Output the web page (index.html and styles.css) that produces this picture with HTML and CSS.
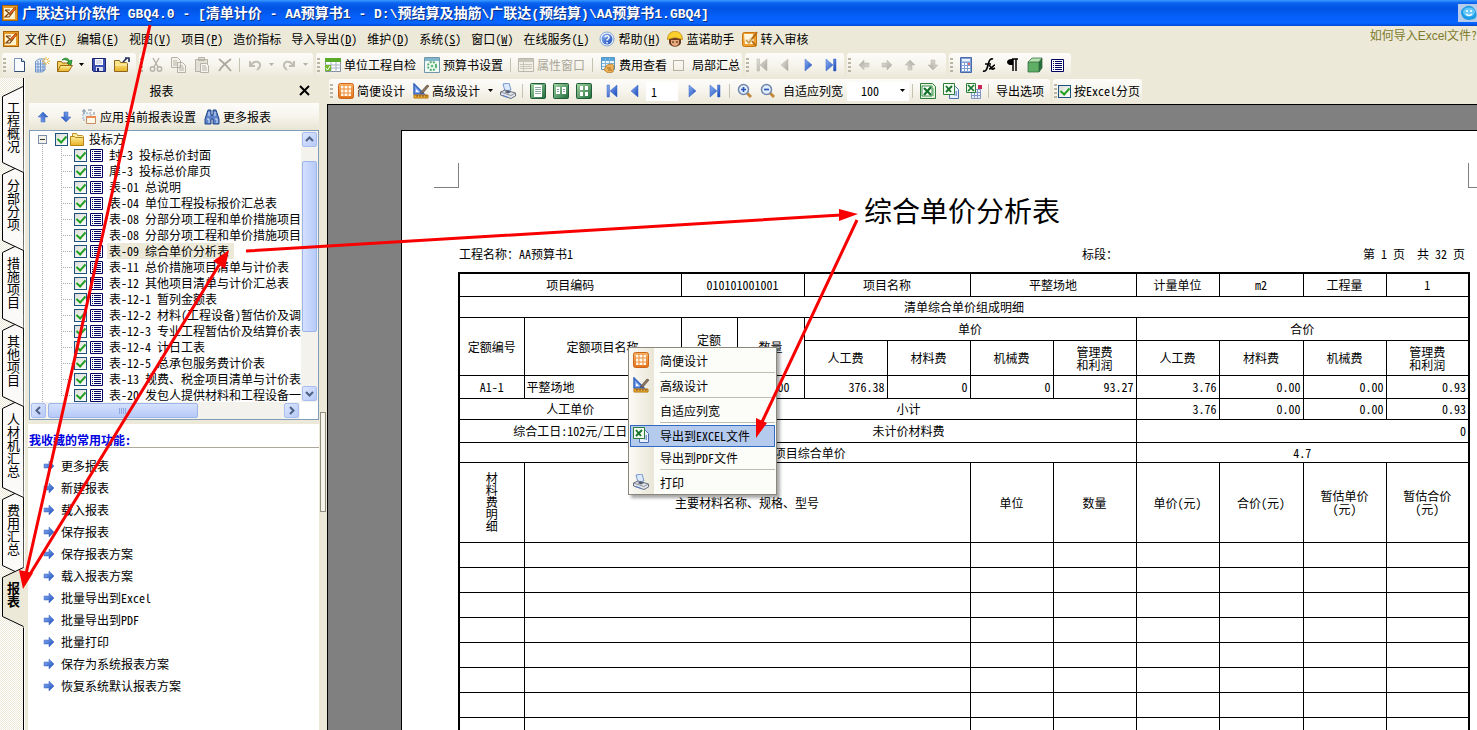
FILE: index.html
```html
<!DOCTYPE html>
<html lang="zh-CN">
<head>
<meta charset="utf-8">
<title>广联达计价软件 GBQ4.0</title>
<link rel="stylesheet" href="styles.css">
</head>
<body>
<svg class="sprite" aria-hidden="true">
<defs>
<linearGradient id="blu" x1="0" y1="0" x2="1" y2="1"><stop offset="0" stop-color="#8db4f4"/><stop offset="1" stop-color="#1746b8"/></linearGradient>
<linearGradient id="gra" x1="0" y1="0" x2="1" y2="1"><stop offset="0" stop-color="#e2e0d8"/><stop offset="1" stop-color="#a9a79e"/></linearGradient>
<linearGradient id="grn" x1="0" y1="0" x2="1" y2="1"><stop offset="0" stop-color="#a8d8a8"/><stop offset="1" stop-color="#1e6b3a"/></linearGradient>
<linearGradient id="org" x1="0" y1="0" x2="0" y2="1"><stop offset="0" stop-color="#f9b468"/><stop offset="1" stop-color="#e2711a"/></linearGradient>
<linearGradient id="yel" x1="0" y1="0" x2="0" y2="1"><stop offset="0" stop-color="#fdf0a0"/><stop offset="1" stop-color="#e8b020"/></linearGradient>
</defs>
<symbol id="app" viewBox="0 0 16 16"><rect x=".5" y=".5" width="15" height="15" fill="#e89a28" stroke="#a86408"/><path d="M2 3h9l2 3v8H2z" fill="#fff3cf"/><path d="M3 5h5M3 5l4 3-4 4h4l4-5" fill="none" stroke="#7c3f0a" stroke-width="1.200"/><path d="m7 10 1-3 5-5 1 2-5 5z" fill="#e8641a" stroke="#7c3f0a" stroke-width=".6"/></symbol>
<symbol id="new" viewBox="0 0 16 16"><path d="M3.500 1.500h7l3 3v10h-10z" fill="#f8fbff" stroke="#7d93b8"/><path d="M13.500 4.500v10h-10" fill="none" stroke="#31486f"/><path d="M10.500 1.500v3h3" fill="#cddcf4" stroke="#31486f"/></symbol>
<symbol id="newp" viewBox="0 0 16 16"><path d="M1.500 4.500 5 2h6v11l-3 2H1.500z" fill="#e4eefc" stroke="#6f93c8"/><path d="M4 4v11M6.500 3v12M9 3v11M1 7h10M1 10h10M1 13h10" stroke="#6f93c8"/><path d="M12 0v8M8 4h8M9 1l6 6M15 1 9 7" stroke="#f5b83a"/><circle cx="12" cy="4" r="1.500" fill="#fff"/></symbol>
<symbol id="open" viewBox="0 0 16 16"><path d="M.5 14.500v-10h4l1 1.500h6v3" fill="#f5cf60" stroke="#9a6b10"/><path d="m.5 14.500 3-6h12l-4 6z" fill="url(#yel)" stroke="#9a6b10"/><path d="M5 3c3-3 6-2 8 1l2-1-1 5-4-2 2-1c-2-2-4-3-7-2z" fill="#35b23c" stroke="#12691b" stroke-width=".7"/></symbol>
<symbol id="save" viewBox="0 0 16 16"><path d="M1.500 1.500h13v13h-12l-1-1z" fill="#3d51b4" stroke="#1b2470"/><path d="M4 2h8v6H4z" fill="#fff"/><path d="M5 4h6M5 6h6" stroke="#b7bed8"/><path d="M5 10h7v4H5z" fill="#d9dff0"/><path d="M6 11h2v3H6z" fill="#1b2470"/></symbol>
<symbol id="fold" viewBox="0 0 16 16"><path d="M.5 14.500v-11h5l1 2h6l1 1v8z" fill="url(#yel)" stroke="#8a6420"/><path d="M1 8h12" stroke="#fff5c0"/><path d="m9 5 4-4M11 1h4v4" fill="none" stroke="#26355c" stroke-width="1.700"/></symbol>
<symbol id="cut" viewBox="0 0 16 16"><g fill="none" stroke="#b5b2a7" stroke-width="1.400"><path d="m5 1 5 9M11 1 6 10"/><circle cx="4.500" cy="12" r="2.200"/><circle cx="11.500" cy="12" r="2.200"/></g></symbol>
<symbol id="copy" viewBox="0 0 16 16"><g fill="#f3f1e9" stroke="#b5b2a7"><path d="M.5.5h6l3 3v7h-9zM6.500 5.500h5l3 3v7h-8z"/><path d="M2 4h4M2 6h4M2 8h4M8 9h4M8 11h5M8 13h5"/></g></symbol>
<symbol id="paste" viewBox="0 0 16 16"><g fill="#e3e0d5" stroke="#b5b2a7"><path d="M1.500 2.500h12v12h-12zM4.500.5h6v3h-6z"/><path d="M6.500 6.500h6l2 2v7h-8z" fill="#f6f4ee"/><path d="M8 9h4M8 11h5M8 13h5"/></g></symbol>
<symbol id="del" viewBox="0 0 16 16"><path d="M2 2c4 3 8 7 12 12M14 2C10 5 5 9 2 14" fill="none" stroke="#aaa79c" stroke-width="1.700"/></symbol>
<symbol id="undo" viewBox="0 0 16 16"><path d="M3 4v5h5M4 8c3-5 10-4 9 1-.4 2-2 3-3 4" fill="none" stroke="#c0bdb2" stroke-width="2"/></symbol>
<symbol id="redo" viewBox="0 0 16 16"><path d="M13 4v5H8M12 8c-3-5-10-4-9 1 .4 2 2 3 3 4" fill="none" stroke="#c0bdb2" stroke-width="2"/></symbol>
<symbol id="dd" viewBox="0 0 7 4"><path d="M1 0h5L3.500 3z" fill="currentColor"/></symbol>
<symbol id="chk" viewBox="0 0 16 16"><path d="M.5 1.500h15v13H.5z" fill="#fff" stroke="#7f8fa0"/><path d="M0 1h16v4H0z" fill="#5aaa28"/><path d="M0 8h16M0 11h16M6 5v10M11 5v10" stroke="#a8b3bf"/><path d="M0 8h6v6H0z" fill="#73b92c"/><path d="m1 11 1.500 2L5 9" stroke="#fff" fill="none"/></symbol>
<symbol id="set" viewBox="0 0 16 16"><path d="M.5.5h15v15H.5z" fill="#f0f8f5" stroke="#6f97a7"/><path d="M1 1h14v3H1z" fill="#82b4cc"/><circle cx="8" cy="9" r="4" fill="#fff" stroke="#4fae6a" stroke-width="2" stroke-dasharray="2 1.200"/><circle cx="8" cy="9" r="1.500" fill="#66bd7c"/></symbol>
<symbol id="prop" viewBox="0 0 16 16"><path d="M.5 1.500h15v13H.5z" fill="#f2f0e6" stroke="#bbb8ab"/><path d="M1 2h14v3H1z" fill="#c8c5b9"/><path d="M2 7.500h12M2 9.500h12M2 11.500h12M5.500 5v9" stroke="#c8c5b9"/></symbol>
<symbol id="fee" viewBox="0 0 16 16"><path d="M1.500.5h13v12h-13z" fill="#eef7ff" stroke="#5c95bf"/><path d="M2 1h12v3H2z" fill="#55a5dd"/><path d="M2 6.500h12M2 9.500h12M5.500 1v11M9.500 1v11" stroke="#7db5dd"/><path d="M6 9c2-2 7-3 8 0l-1 6-5 1-4-3z" fill="#edb35b" stroke="#a96a1c" stroke-width=".7"/><path d="M7 11h4M8 13h4" stroke="#a96a1c"/></symbol>
<symbol id="help" viewBox="0 0 16 16"><circle cx="8" cy="8" r="7" fill="#fff" stroke="#7ea2d8"/><circle cx="8" cy="8" r="5.500" fill="url(#blu)"/><path d="M6 6.500C6 4 10 4 10 6.500 10 8 8 8 8 9.500M8 11v1.500" fill="none" stroke="#fff" stroke-width="1.500"/></symbol>
<symbol id="man" viewBox="0 0 16 16"><path d="M2 7h12v5c-2 5-10 5-12 0z" fill="#6a3a22"/><path d="M4 9h8v3c-1 4-7 4-8 0z" fill="#e8a87a"/><path d="M.5 8.500c0-11 15-11 15 0L8 6.500z" fill="#f9cf2c" stroke="#b87b0a" stroke-width=".7"/><path d="M5 11h2M9 11h2" stroke="#321"/></symbol>
<symbol id="audit" viewBox="0 0 16 16"><rect x=".5" y="1.500" width="14" height="14" rx="2" fill="#f0a030" stroke="#c67510"/><path d="M2 3h9l1 10H3z" fill="#fff6dc"/><path d="M4 9l3 3 4-6" stroke="#c79a4b" stroke-width="1.500" fill="#e9dcc0"/><path d="m10 10 4 5M10 8l5-7" stroke="#b86b12" stroke-width="2"/></symbol>
<symbol id="first" viewBox="0 0 16 16"><path d="M3 2h2.500v12H3zM13 2v12L6 8z"/></symbol>
<symbol id="prev" viewBox="0 0 16 16"><path d="M11 2v12L4 8z"/></symbol>
<symbol id="next" viewBox="0 0 16 16"><path d="M5 2v12l7-6z"/></symbol>
<symbol id="last" viewBox="0 0 16 16"><path d="M13 2h-2.500v12H13zM3 2v12l7-6z"/></symbol>
<symbol id="arr" viewBox="0 0 12 12"><path d="M1 4h5V1l5 5-5 5V8H1z"/></symbol>
<symbol id="calc" viewBox="0 0 16 16"><path d="M2.500.5h11v15h-11z" fill="#7f9fd8" stroke="#4a68a8"/><path d="M4 2h8v2.500H4z" fill="#e9f2ff"/><path d="M4 7h8M4 10h8M4 13h8" stroke="#fff" stroke-width="2" stroke-dasharray="2 1"/><path d="M10 6h2v2h-2z" fill="#e66"/></symbol>
<symbol id="fx" viewBox="0 0 16 16"><path d="M2 14c3 1 4-2 5-6s2-7 5-6M4 7h6M8 9c2-1 2 4 4 3l2-1M14 8c-2 0-3 4-6 4" fill="none" stroke="#000" stroke-width="1.700"/></symbol>
<symbol id="para" viewBox="0 0 16 16"><path d="M8 2h6M9 2v12M12 2v12" stroke="#000" stroke-width="1.500"/><path d="M9 2C1 1 1 9 9 8z"/></symbol>
<symbol id="cube" viewBox="0 0 16 16"><path d="m1 5 4-4h10l-3 4z" fill="#b5e0b0"/><path d="M1 5h11v10H1z" fill="#5fae66"/><path d="m12 5 3-4v10l-3 4z" fill="#286e3a"/><path d="m1 5 4-4h10v10l-3 4H1zM1 5h11v10M12 5l3-4" fill="none" stroke="#2c6139" stroke-width=".7"/></symbol>
<symbol id="list" viewBox="0 0 13 13"><path d="M.5.5h12v12H.5z" fill="#fff" stroke="#000060"/><path d="M2 2.500h1M2 4.500h1M2 6.500h1M2 8.500h1M2 10.500h1M4 2.500h7M4 4.500h7M4 6.500h7M4 8.500h7M4 10.500h7" stroke="#000060"/></symbol>
<symbol id="grid" viewBox="0 0 16 16"><rect x=".5" y=".5" width="15" height="15" rx="2" fill="url(#org)" stroke="#cc661a"/><path d="M3 3h10v10H3z" fill="#fff8ea"/><path d="M2 6h12M2 10h12M6 2v12M10 2v12" stroke="#ee8b36"/></symbol>
<symbol id="design" viewBox="0 0 16 16"><path d="M1 1v10h10z" fill="#7ea6ee" stroke="#3463bd" stroke-width="1.500"/><path d="M3 6v3h3z" fill="#fff"/><path d="M1 12h14v3H1z" fill="#f4b52a" stroke="#b2740c"/><path d="M4 12v2M7 12v2M10 12v2M13 12v2" stroke="#744"/><path d="m7 10 7-8 2 1-6 7z" fill="#8d7762" stroke="#4e3c2c" stroke-width=".6"/></symbol>
<symbol id="print" viewBox="0 0 16 16"><path d="M3 1 9 0l2 7-6 1z" fill="#dceaff" stroke="#7697ce"/><path d="m.5 9 4.500-2 10.500 3v3L11 15.500.5 12z" fill="#e3e5ea" stroke="#666e7e"/><path d="m.5 9 10.500 3.500 4.500-2.500" fill="none" stroke="#8a92a0"/><path d="m4.500 9 3-1.500L11 9l-3 1.500z" fill="#555d6d"/><path d="m3 12.500 5 2" stroke="#4e7fd4"/></symbol>
<symbol id="v1" viewBox="0 0 16 16"><rect x=".5" y=".5" width="15" height="15" rx="1" fill="url(#grn)" stroke="#205c38"/><path d="M4 2h8v12H4z" fill="#fff"/><path d="M5 4.500h6M5 6.500h6M5 8.500h6M5 10.500h6" stroke="#8faaa0"/></symbol>
<symbol id="v2" viewBox="0 0 16 16"><rect x=".5" y=".5" width="15" height="15" rx="1" fill="url(#grn)" stroke="#205c38"/><path d="M3 4h4v7H3zM9 4h4v7H9z" fill="#fff"/><path d="M4 6.500h2M4 8.500h2M10 6.500h2M10 8.500h2" stroke="#7f9a90"/></symbol>
<symbol id="v4" viewBox="0 0 16 16"><rect x=".5" y=".5" width="15" height="15" rx="1" fill="url(#grn)" stroke="#205c38"/><path d="M4 3h3v4H4zM9 3h3v4H9zM4 9h3v4H4zM9 9h3v4H9z" fill="#fff"/></symbol>
<symbol id="zin" viewBox="0 0 16 16"><path d="m10 10 4 4" stroke="#c48a3c" stroke-width="3"/><circle cx="6.500" cy="6.500" r="5" fill="#e4effc" stroke="#6f86ad" stroke-width="1.500"/><path d="M4 6.500h5M6.500 4v5" stroke="#2b58b8" stroke-width="1.700"/></symbol>
<symbol id="zout" viewBox="0 0 16 16"><path d="m10 10 4 4" stroke="#c48a3c" stroke-width="3"/><circle cx="6.500" cy="6.500" r="5" fill="#e4effc" stroke="#6f86ad" stroke-width="1.500"/><path d="M4 6.500h5" stroke="#2b58b8" stroke-width="1.700"/></symbol>
<symbol id="xl" viewBox="0 0 16 16"><path d="M.5.5h12l3 3v12H.5z" fill="#e4f2df" stroke="#2d7d3b"/><path d="M2 3h10v10H2z" fill="#fff" stroke="#3d8e4b"/><path d="m4 5 7 7M11 4 4 12" stroke="#15732a" stroke-width="2.200"/><path d="M13 5v8" stroke="#5ba867"/></symbol>
<symbol id="xl2" viewBox="0 0 16 16"><path d="M6.500 3.500h6l3 3v9h-9z" fill="#e9f1ff" stroke="#4c70af"/><path d="M12 8v5M13.500 8v5" stroke="#7d9dd6"/><path d="M.5.5h11v11H.5z" fill="#f2faef" stroke="#2d7d3b"/><path d="m3 3 5 6M9 3 3 9" stroke="#15732a" stroke-width="1.900"/></symbol>
<symbol id="xl3" viewBox="0 0 16 16"><path d="M5.500 6.500h9v9h-9zM8.500 6v9M11.500 6v9M5 9.500h9M5 12.500h9" fill="#eef3fd" stroke="#8096c3"/><path d="M.5.5h9v9h-9z" fill="#f2faef" stroke="#2d7d3b"/><path d="m2 2 6 6M8 2 2 8" stroke="#15732a" stroke-width="1.700"/><path d="M12 2h4v4h-4z" fill="#cc2456"/></symbol>
<symbol id="apply" viewBox="0 0 16 16"><path d="M2 4h8v7H2z" fill="#e5edf4" stroke="#98a7b5" stroke-dasharray="2 1"/><path d="M1 2h4M3 0v5M7 1h4M13 3v3" stroke="#7891a8"/><path d="M5.500 7.500h9v7h-9z" fill="#fff7e7" stroke="#c98a65"/><path d="M5 7h10v2H5z" fill="#e88b55"/></symbol>
<symbol id="bino" viewBox="0 0 16 16"><path d="M4 1h3v4l1 2 1-2V1h3l3 9v5H9v-5H7v5H1v-5z" fill="#5e83c6" stroke="#20478d"/><path d="M3 10h2v4M11 10h2v4M5 3v4M11 3v4" fill="none" stroke="#d9e8ff"/></symbol>
<symbol id="tfold" viewBox="0 0 15 14"><path d="M2.500 11.500V1.500h4l1 2h5l1 1v7z" fill="#fff1a5" stroke="#c0902a"/><path d="M.5 13.500v-9h4l1 1h8v8z" fill="url(#yel)" stroke="#b88315"/></symbol>
<symbol id="bot" viewBox="0 0 16 16"><path d="M0 6c1-2 2-3 4-4 4-3 10 0 11 5 2 6-2 8-7 8S1 12 0 8z" fill="#1e9ce6"/><ellipse cx="8" cy="7" rx="6" ry="4.500" fill="#66c8fa"/><path d="M5 6h2M9 6h2M5 9c2 2 4 2 6 0" stroke="#fff" stroke-width="1.500" fill="none"/></symbol>
</svg>

<header class="title"><svg class="i"><use href="#app"/></svg><h1>广联达计价软件<span class="m"> GBQ4.0 - [</span>清单计价<span class="m"> - AA</span>预算书<span class="m">1 - D:\</span>预结算及抽筋<span class="m">\</span>广联达<span class="m">(</span>预结算<span class="m">)\AA</span>预算书<span class="m">1.GBQ4]</span></h1><span class="bot"><svg class="i"><use href="#bot"/></svg></span></header>

<nav class="menu">
<svg class="i"><use href="#app"/></svg>
<button>文件(<u>F</u>)</button><button>编辑(<u>E</u>)</button><button>视图(<u>V</u>)</button><button>项目(<u>P</u>)</button><button>造价指标</button><button>导入导出(<u>D</u>)</button><button>维护(<u>D</u>)</button><button>系统(<u>S</u>)</button><button>窗口(<u>W</u>)</button><button>在线服务(<u>L</u>)</button><button class="wi"><svg class="i"><use href="#help"/></svg><span>帮助(<u>H</u>)</span></button><button class="wi"><svg class="i"><use href="#man"/></svg>蓝诺助手</button><button class="wi"><svg class="i"><use href="#audit"/></svg>转入审核</button>
<a class="howto" href="#">如何导入<span>Excel</span>文件?</a>
</nav>

<div class="bar top">
<div class="grp g1"><i class="grip"></i><button class="b" aria-label="新建"><svg class="i"><use href="#new"/></svg></button><button class="b" aria-label="新建工程"><svg class="i"><use href="#newp"/></svg></button><button class="b" aria-label="打开"><svg class="i"><use href="#open"/></svg></button><button class="dd" aria-label="更多"><svg><use href="#dd"/></svg></button><button class="b" aria-label="保存"><svg class="i"><use href="#save"/></svg></button><button class="b" aria-label="目录"><svg class="i"><use href="#fold"/></svg></button></div>
<div class="grp g2"><i class="grip"></i><button class="b" aria-label="剪切"><svg class="i"><use href="#cut"/></svg></button><button class="b" aria-label="复制"><svg class="i"><use href="#copy"/></svg></button><button class="b" aria-label="粘贴"><svg class="i"><use href="#paste"/></svg></button><button class="b" aria-label="删除"><svg class="i"><use href="#del"/></svg></button><i class="sep"></i><button class="b" aria-label="撤销"><svg class="i"><use href="#undo"/></svg></button><button class="dd off" aria-label="更多"><svg><use href="#dd"/></svg></button><button class="b" aria-label="恢复"><svg class="i"><use href="#redo"/></svg></button><button class="dd off" aria-label="更多"><svg><use href="#dd"/></svg></button></div>
<div class="grp g3"><i class="grip"></i><button class="t"><svg class="i"><use href="#chk"/></svg>单位工程自检</button><button class="t"><svg class="i"><use href="#set"/></svg>预算书设置</button><i class="sep"></i><button class="t" disabled><svg class="i"><use href="#prop"/></svg>属性窗口</button><i class="sep"></i><button class="t"><svg class="i"><use href="#fee"/></svg>费用查看</button><input class="plain" type="checkbox" id="part"><label for="part" class="part">局部汇总</label></div>
<div class="grp g4"><i class="grip"></i><button class="b ng" aria-label="首个"><svg class="i"><use href="#first"/></svg></button><button class="b ng" aria-label="上一个"><svg class="i"><use href="#prev"/></svg></button><button class="b nb" aria-label="下一个"><svg class="i"><use href="#next"/></svg></button><button class="b nb" aria-label="末个"><svg class="i"><use href="#last"/></svg></button></div>
<div class="grp g4"><i class="grip"></i><button class="b ng" aria-label="左移"><svg class="s r180"><use href="#arr"/></svg></button><button class="b ng" aria-label="右移"><svg class="s"><use href="#arr"/></svg></button><button class="b ng" aria-label="上移"><svg class="s up"><use href="#arr"/></svg></button><button class="b ng" aria-label="下移"><svg class="s down"><use href="#arr"/></svg></button></div>
<div class="grp"><i class="grip"></i><button class="b" aria-label="计算器"><svg class="i"><use href="#calc"/></svg></button><button class="b" aria-label="函数"><svg class="i"><use href="#fx"/></svg></button><button class="b" aria-label="段落"><svg class="i"><use href="#para"/></svg></button><button class="b" aria-label="图块"><svg class="i"><use href="#cube"/></svg></button><button class="b" aria-label="列表"><svg class="ls"><use href="#list"/></svg></button></div>
</div>

<div class="work">
<nav class="tabs">
<button class="t1"><svg><path d="M23 .5 2.500 10.500v66l21 10"/></svg><span>工程概况</span></button>
<button class="t2"><svg><path d="M23 .5 2.500 10.500v66l21 10"/></svg><span>分部分项</span></button>
<button class="t3"><svg><path d="M23 .5 2.500 10.500v66l21 10"/></svg><span>措施项目</span></button>
<button class="t4"><svg><path d="M23 .5 2.500 10.500v66l21 10"/></svg><span>其他项目</span></button>
<button class="t5"><svg><path d="M23 .5 2.500 10.500v79l21 10"/></svg><span>人材机汇总</span></button>
<button class="t6"><svg><path d="M23 .5 2.500 10.500v66l21 10"/></svg><span>费用汇总</span></button>
<button class="act"><svg><path class="cover" d="M23 .5h5v60h-5z"/><path d="M23.500 .5 2.500 10.500v39l21 10"/></svg><span>报表</span></button>
</nav>

<aside class="pane">
<div class="phead"><h2>报表</h2><button aria-label="关闭"><svg viewBox="0 0 11 11"><path d="m1 1 9 9M10 1 1 10" stroke="#000" stroke-width="2"/></svg></button></div>
<div class="ptool"><button class="b nb" aria-label="上移"><svg class="s up"><use href="#arr"/></svg></button><button class="b nb" aria-label="下移"><svg class="s down"><use href="#arr"/></svg></button><button class="t"><svg class="i"><use href="#apply"/></svg>应用当前报表设置</button><button class="t"><svg class="i"><use href="#bino"/></svg>更多报表</button></div>
<div class="tree">
<div class="view">
<div class="root"><i class="minus"></i><input type="checkbox" id="r0" checked><svg class="tf"><use href="#tfold"/></svg><label for="r0">投标方</label></div>
<ul>
<li><input type="checkbox" id="c1" checked><svg><use href="#list"/></svg><label for="c1">封-3 投标总价封面</label></li>
<li><input type="checkbox" id="c2" checked><svg><use href="#list"/></svg><label for="c2">扉-3 投标总价扉页</label></li>
<li><input type="checkbox" id="c3" checked><svg><use href="#list"/></svg><label for="c3">表-01 总说明</label></li>
<li><input type="checkbox" id="c4" checked><svg><use href="#list"/></svg><label for="c4">表-04 单位工程投标报价汇总表</label></li>
<li><input type="checkbox" id="c5" checked><svg><use href="#list"/></svg><label for="c5">表-08 分部分项工程和单价措施项目</label></li>
<li><input type="checkbox" id="c6" checked><svg><use href="#list"/></svg><label for="c6">表-08 分部分项工程和单价措施项目</label></li>
<li><input type="checkbox" id="c7" checked><svg><use href="#list"/></svg><label for="c7" class="sel">表-09 综合单价分析表</label></li>
<li><input type="checkbox" id="c8" checked><svg><use href="#list"/></svg><label for="c8">表-11 总价措施项目清单与计价表</label></li>
<li><input type="checkbox" id="c9" checked><svg><use href="#list"/></svg><label for="c9">表-12 其他项目清单与计价汇总表</label></li>
<li><input type="checkbox" id="c10" checked><svg><use href="#list"/></svg><label for="c10">表-12-1 暂列金额表</label></li>
<li><input type="checkbox" id="c11" checked><svg><use href="#list"/></svg><label for="c11">表-12-2 材料(工程设备)暂估价及调</label></li>
<li><input type="checkbox" id="c12" checked><svg><use href="#list"/></svg><label for="c12">表-12-3 专业工程暂估价及结算价表</label></li>
<li><input type="checkbox" id="c13" checked><svg><use href="#list"/></svg><label for="c13">表-12-4 计日工表</label></li>
<li><input type="checkbox" id="c14" checked><svg><use href="#list"/></svg><label for="c14">表-12-5 总承包服务费计价表</label></li>
<li><input type="checkbox" id="c15" checked><svg><use href="#list"/></svg><label for="c15">表-13 规费、税金项目清单与计价表</label></li>
<li><input type="checkbox" id="c16" checked><svg><use href="#list"/></svg><label for="c16">表-20 发包人提供材料和工程设备一</label></li>
</ul>
</div>
<div class="vs"><button aria-label="向上"><svg viewBox="0 0 9 9"><path d="m1 6 3.500-3.500L8 6"/></svg></button><i class="thumb"></i><button aria-label="向下"><svg viewBox="0 0 9 9"><path d="m1 3 3.500 3.500L8 3"/></svg></button></div>
<div class="hs"><button aria-label="向左"><svg viewBox="0 0 9 9"><path d="M6 1 2.500 4.500 6 8"/></svg></button><i class="thumb"></i><button aria-label="向右"><svg viewBox="0 0 9 9"><path d="m3 1 3.500 3.500L3 8"/></svg></button></div>
</div>
<section class="fav">
<h3>我收藏的常用功能:</h3>
<a href="#"><svg class="s"><use href="#arr"/></svg>更多报表</a>
<a href="#"><svg class="s"><use href="#arr"/></svg>新建报表</a>
<a href="#"><svg class="s"><use href="#arr"/></svg>载入报表</a>
<a href="#"><svg class="s"><use href="#arr"/></svg>保存报表</a>
<a href="#"><svg class="s"><use href="#arr"/></svg>保存报表方案</a>
<a href="#"><svg class="s"><use href="#arr"/></svg>载入报表方案</a>
<a href="#"><svg class="s"><use href="#arr"/></svg>批量导出到Excel</a>
<a href="#"><svg class="s"><use href="#arr"/></svg>批量导出到PDF</a>
<a href="#"><svg class="s"><use href="#arr"/></svg>批量打印</a>
<a href="#"><svg class="s"><use href="#arr"/></svg>保存为系统报表方案</a>
<a href="#"><svg class="s"><use href="#arr"/></svg>恢复系统默认报表方案</a>
</section>
</aside>
<div class="split"><i></i></div>

<main>
<div class="bar">
<div class="grp"><i class="grip"></i><button class="t"><svg class="i"><use href="#grid"/></svg>简便设计</button><button class="t"><svg class="i"><use href="#design"/></svg>高级设计</button><button class="dd" aria-label="更多"><svg><use href="#dd"/></svg></button><button class="b" aria-label="打印"><svg class="i"><use href="#print"/></svg></button><i class="sep"></i><button class="b" aria-label="单页"><svg class="i"><use href="#v1"/></svg></button><button class="b" aria-label="双页"><svg class="i"><use href="#v2"/></svg></button><button class="b" aria-label="四页"><svg class="i"><use href="#v4"/></svg></button><button class="b nb pg" aria-label="首页"><svg class="i"><use href="#first"/></svg></button><button class="b nb" aria-label="上页"><svg class="i"><use href="#prev"/></svg></button><input class="num" value="1" aria-label="页码"><button class="b nb" aria-label="下页"><svg class="i"><use href="#next"/></svg></button><button class="b nb" aria-label="末页"><svg class="i"><use href="#last"/></svg></button><i class="sep"></i><button class="b" aria-label="放大"><svg class="i"><use href="#zin"/></svg></button><button class="b" aria-label="缩小"><svg class="i"><use href="#zout"/></svg></button><button class="t fit">自适应列宽</button><span class="zoom"><select aria-label="缩放"><option>100</option></select><svg><use href="#dd"/></svg></span><i class="sep"></i><button class="b" aria-label="导出Excel"><svg class="i"><use href="#xl"/></svg></button><button class="b" aria-label="批量导出"><svg class="i"><use href="#xl2"/></svg></button><button class="b" aria-label="导出表格"><svg class="i"><use href="#xl3"/></svg></button><i class="sep"></i><button class="t opt">导出选项</button></div>
<div class="grp"><i class="grip"></i><input type="checkbox" id="pg" checked><label for="pg">按Excel分页</label></div>
</div>
<div class="canvas">
<article class="page">
<div class="marks"><i></i><i></i></div>
<h2>综合单价分析表</h2>
<div class="meta"><span>工程名称：AA预算书1</span><span>标段：</span><span>第 1 页  共 32 页</span></div>
<table>
<colgroup><col class="w65"><col class="w157"><col class="w56"><col class="w67"><col class="w83"><col class="w83"><col class="w83"><col class="w83"><col class="w83"><col class="w84"><col class="w83"><col class="w83"></colgroup>
<tr class="h23"><td colspan="2">项目编码</td><td colspan="2">010101001001</td><td colspan="2">项目名称</td><td colspan="2">平整场地</td><td>计量单位</td><td>m2</td><td>工程量</td><td>1</td></tr>
<tr class="h21"><td colspan="12">清单综合单价组成明细</td></tr>
<tr class="h23"><td rowspan="2">定额编号</td><td rowspan="2">定额项目名称</td><td rowspan="2">定额<br>单位</td><td rowspan="2">数量</td><td colspan="4">单价</td><td colspan="4">合价</td></tr>
<tr class="h35"><td>人工费</td><td>材料费</td><td>机械费</td><td>管理费<br>和利润</td><td>人工费</td><td>材料费</td><td>机械费</td><td>管理费<br>和利润</td></tr>
<tr class="h23 n"><td class="c">A1-1</td><td class="l">平整场地</td><td></td><td class="q">1.00</td><td>376.38</td><td>0</td><td>0</td><td>93.27</td><td>3.76</td><td>0.00</td><td>0.00</td><td>0.93</td></tr>
<tr class="h21 n"><td class="c" colspan="2">人工单价</td><td class="c" colspan="6">小计</td><td>3.76</td><td>0.00</td><td>0.00</td><td>0.93</td></tr>
<tr class="h23 n"><td class="c" colspan="2">综合工日:102元/工日</td><td class="c" colspan="6">未计价材料费</td><td colspan="4">0</td></tr>
<tr class="h20"><td colspan="8">清单项目综合单价</td><td colspan="4">4.7</td></tr>
<tr class="h80"><td><span class="v">材料费明细</span></td><td colspan="5">主要材料名称、规格、型号</td><td>单位</td><td>数量</td><td>单价(元)</td><td>合价(元)</td><td>暂估单价<br>(元)</td><td>暂估合价<br>(元)</td></tr>
<tr class="h25"><td></td><td colspan="5"></td><td></td><td></td><td></td><td></td><td></td><td></td></tr>
<tr class="h25"><td></td><td colspan="5"></td><td></td><td></td><td></td><td></td><td></td><td></td></tr>
<tr class="h25"><td></td><td colspan="5"></td><td></td><td></td><td></td><td></td><td></td><td></td></tr>
<tr class="h25"><td></td><td colspan="5"></td><td></td><td></td><td></td><td></td><td></td><td></td></tr>
<tr class="h25"><td></td><td colspan="5"></td><td></td><td></td><td></td><td></td><td></td><td></td></tr>
<tr class="h25"><td></td><td colspan="5"></td><td></td><td></td><td></td><td></td><td></td><td></td></tr>
<tr class="h25"><td></td><td colspan="5"></td><td></td><td></td><td></td><td></td><td></td><td></td></tr>
<tr class="h25"><td></td><td colspan="5"></td><td></td><td></td><td></td><td></td><td></td><td></td></tr>
</table>
</article>
</div>
</main>
</div>

<div class="ctx" role="menu">
<button role="menuitem"><svg class="i"><use href="#grid"/></svg>简便设计</button><hr>
<button role="menuitem"><svg class="i"><use href="#design"/></svg>高级设计</button><hr>
<button role="menuitem">自适应列宽</button><hr>
<button role="menuitem" class="on"><svg class="i"><use href="#xl2"/></svg>导出到EXCEL文件</button>
<button role="menuitem">导出到PDF文件</button><hr>
<button role="menuitem"><svg class="i"><use href="#print"/></svg>打印</button>
</div>

<svg class="guide" aria-hidden="true"><g stroke="#f80000" stroke-width="3" fill="none"><path d="M150 25 26 574M24 584 219 265M246 251l595-36M857 220l-95 202"/></g><path d="m19 570 14 3-10 16zM229 250l-16 11 12 8zM839 209v12l19-7zM756 418l11 5-11 15z" fill="#f80000"/></svg>
</body>
</html>
```
FILE: styles.css
```css
* { box-sizing: border-box; }
html, body { height: 100%; }
body {
  margin: 0; position: relative; overflow: hidden;
  display: flex; flex-direction: column;
  background: #ece9d8; color: #000;
  font: 12px/16px "Noto Sans Mono CJK SC", "Noto Sans CJK SC", sans-serif;
}
button, input, select { font: inherit; color: inherit; margin: 0; padding: 0; border: 0; background: none; }
button { display: flex; align-items: center; white-space: nowrap; }
a { color: inherit; text-decoration: none; }
h1, h2, h3 { margin: 0; }
svg { display: block; flex: none; }
.sprite { position: absolute; width: 0; height: 0; }
.i { width: 16px; height: 16px; }
.s { width: 12px; height: 12px; }
.ls { width: 13px; height: 13px; }
.r180 { transform: rotate(180deg); }
.up { transform: rotate(-90deg); }
.down { transform: rotate(90deg); }
.ng { fill: url(#gra); stroke: #b9b6ab; stroke-width: .5; }
.nb { fill: url(#blu); stroke: #3c66c4; stroke-width: .5; }

.title {
  flex: none; height: 26px; display: flex; align-items: center; gap: 4px; padding-left: 2px;
  background: linear-gradient(#3a9bff 0, #0a63f0 3px, #0153e2 8px, #0560fa 17px, #0566ff 23px, #0245d0 26px);
}
.title h1 { flex: 1; white-space: pre; color: #fff; font-size: 14px; line-height: 20px; font-weight: 700; text-shadow: 1px 1px #0a2f80; }
.m { font-family: "Liberation Mono", monospace; font-size: 13px; }
.bot { width: 19px; height: 18px; background: #b8cbe8; padding: 1px 0 0 3px; overflow: hidden; }

.menu { flex: none; height: 26px; display: flex; align-items: center; gap: 10px; padding-left: 3px; }
.menu > .i { margin-right: -4px; }
.menu .wi { gap: 3px; }
.menu .wi + .wi { margin-left: -3px; }
.howto { margin: 0 0 8px auto; color: #807a2c; white-space: nowrap; }
.howto span { font-family: "Liberation Sans", sans-serif; }

.bar { flex: none; height: 26px; display: flex; align-items: center; gap: 3px; padding: 0 2px; white-space: nowrap; }
.grp {
  height: 25px; display: flex; align-items: center; padding-right: 2px; border-radius: 3px;
  background: linear-gradient(#fdfcfa, #f6f4ec 50%, #ebe8d9);
}
.top .g1 { padding-right: 3px; }
.grip { flex: none; width: 3px; height: 15px; margin: 0 1px; background: repeating-linear-gradient(#b9b5a2 0 2px, transparent 2px 4px); }
.b { width: 23px; height: 22px; justify-content: center; flex: none; }
.dd { width: 12px; height: 22px; justify-content: center; }
.top .dd { width: 11px; }
.dd svg, .zoom svg { width: 7px; height: 4px; }
.off { color: #b5b2a7; }
.t { gap: 3px; height: 22px; padding: 0 4px; }
.t:disabled { color: #aca899; }
.sep { flex: none; width: 1px; height: 14px; margin: 0 3px; background: #c5c2b0; }
.plain { appearance: none; width: 11px; height: 11px; margin: 0 8px 0 2px; border: 1px solid #b5b2a2; }
.pg { margin-left: 5px; }
.num { width: 32px; height: 19px; margin-right: 2px; padding-left: 5px; background: #fff; }
.fit { padding: 0 4px; }
.zoom { display: flex; align-items: center; width: 62px; height: 19px; background: #fff; }
.zoom select { appearance: none; width: 52px; padding-left: 14px; }
.bar label { padding-left: 3px; }
.bar .part { padding: 0; }

input[type=checkbox]:checked {
  appearance: none; flex: none; width: 13px; height: 13px; border: 1px solid #1c5180;
  background: linear-gradient(135deg, #dcdcd7, #fff); display: grid; place-items: center;
}
input[type=checkbox]:checked::after {
  content: ""; width: 4px; height: 7px; margin-bottom: 2px; border: solid #21a121; border-width: 0 2px 2px 0; transform: rotate(42deg);
}

.work { flex: 1; min-height: 0; display: flex; }
.tabs {
  flex: none; width: 24px; padding-top: 8px; border-right: 1px solid #000;
  background: repeating-conic-gradient(#fff 0 25%, #ece9d8 0 50%) 0 0 / 2px 2px;
}
.tabs button { position: relative; display: block; width: 24px; padding: 14px 0 12px; }
.tabs svg { position: absolute; left: 0; top: 0; width: 28px; height: 100%; overflow: visible; fill: #fbfaf8; stroke: #000; }
.tabs span { position: relative; display: block; width: 13px; margin-left: 7px; font-size: 13px; line-height: 13px; white-space: normal; word-break: break-all; }
.t1 { z-index: 6; } .t2 { z-index: 5; } .t3 { z-index: 4; } .t4 { z-index: 3; } .t5 { z-index: 2; } .t6 { z-index: 1; }
.tabs .act { z-index: 7; font-weight: 700; }
.tabs .act svg { fill: #ece9d8; }
.act .cover { stroke: none; }

.pane { flex: none; width: 296px; padding: 0 1px 0 4px; display: flex; flex-direction: column; border-left: 1px solid #fff; }
.phead { height: 25px; display: flex; align-items: center; }
.phead h2 { flex: 1; text-align: center; font-size: 12px; font-weight: 400; padding-left: 5px; }
.phead button { width: 30px; justify-content: center; }
.phead svg { width: 11px; height: 11px; }
.ptool { height: 27px; display: flex; align-items: center; padding-left: 2px; background: linear-gradient(#fdfcfa, #f6f4ec 50%, #e8e5d5); }
.ptool .t { padding: 0 3px 0 4px; }
.ptool .t + .t { padding-left: 5px; }
.tree {
  height: 290px; border: 1px solid #7f9db9; background: #fff; overflow: hidden;
  display: grid; grid-template: 271px 17px / 1fr 17px;
}
.view { overflow: hidden; white-space: nowrap; background: repeating-linear-gradient(#aaa 0 1px, transparent 1px 2px) 12px 14px / 1px 100% no-repeat; }
.root { height: 16px; display: flex; align-items: center; padding-left: 8px; }
.root label { margin-left: 4px; }
.minus { width: 9px; height: 9px; margin-right: 8px; border: 1px solid #7b8ea8; background: linear-gradient(#333, #333) 1px 3px / 5px 1px no-repeat #f4f2e8; }
.tf { width: 15px; height: 14px; margin-left: 2px; }
.view ul { list-style: none; margin: 0; padding: 0 0 0 31px; background: repeating-linear-gradient(#aaa 0 1px, transparent 1px 2px) 31px 0 / 1px 248px no-repeat; }
.view li { height: 16px; display: flex; align-items: center; padding-left: 13px; background: repeating-linear-gradient(90deg, #aaa 0 1px, transparent 1px 2px) 0 8px / 11px 1px no-repeat; }
.view li svg { width: 13px; height: 13px; margin: 0 4px 0 3px; }
.view li label { padding: 0 2px; line-height: 16px; }
.view .sel { background: #ece9d8; padding-right: 5px; }
.vs, .hs { display: flex; background: #f3f2ec; padding: 1px; }
.vs { flex-direction: column; justify-content: space-between; }
.hs { margin-right: 1px; justify-content: space-between; }
.vs button, .hs button { width: 15px; height: 15px; flex: none; justify-content: center; border-radius: 2px; border: 1px solid #a9bdf0; background: linear-gradient(135deg, #dce6fe, #b6c9f6); }
.vs svg, .hs svg { width: 9px; height: 9px; fill: none; stroke: #4d6185; stroke-width: 2; }
.thumb { border: 1px solid #9db4ea; border-radius: 2px; background: #c5d4fb; }
.vs .thumb { height: 171px; margin-bottom: 40px; background: linear-gradient(90deg, #d4e0fe, #b6caf8); }
.hs .thumb { width: 150px; margin-right: 84px; background: repeating-linear-gradient(90deg, #8ea8e2 0 1px, transparent 1px 2px) center / 8px 6px no-repeat, linear-gradient(#d4e0fe, #b6caf8); }
.fav { flex: 1; margin: 4px 0 0 -1px; background: #fff; overflow: hidden; }
.fav h3 { height: 24px; margin-bottom: 7px; padding: 8px 0 0 1px; border-bottom: 1px solid #aca899; color: #0000e0; font-size: 12px; line-height: 15px; }
.fav a { height: 22px; display: flex; align-items: center; gap: 6px; padding-left: 15px; }
.fav svg { fill: url(#blu); stroke: #3c66c4; stroke-width: .5; }
.split { flex: none; width: 7px; padding-top: 334px; }
.split i { display: block; width: 6px; height: 100px; border: 1px solid #8f8d80; background: #f5f3ea; }

main { flex: 1; min-width: 0; display: flex; flex-direction: column; }
.canvas { flex: 1; min-height: 0; display: flex; overflow: hidden; padding: 25px 0 0 73px; border: solid #000; border-width: 1px 0 0 1px; background: #808080; }
.page { flex: 1; border: solid #000; border-width: 1px 0 0 1px; background: #fff; padding: 32px 8px 0 56px; }
.marks { display: flex; justify-content: space-between; margin: 0 -8px 0 -24px; }
.marks i { width: 25px; height: 25px; border: solid #808080; border-width: 0 1px 1px 0; }
.marks i + i { width: 10px; border-width: 0 0 1px 1px; }
.page h2 { margin: 4px 0 18px; padding-right: 4px; text-align: center; font-size: 28px; line-height: 36px; font-weight: 400; }
.meta { display: grid; grid-template-columns: 623px 1fr auto; white-space: pre; margin-bottom: 10px; padding: 0 5px 0 1px; line-height: 16px; }
table { width: 100%; table-layout: fixed; border-collapse: collapse; border: 2px solid #000; }
td { padding: 0 2px; border: 1px solid #000; text-align: center; line-height: 13px; white-space: nowrap; }
.n td { text-align: right; }
.n .c { text-align: center; }
.n .l { text-align: left; }
.n .q { padding-right: 14px; }
.w65 { width: 65px; } .w157 { width: 157px; } .w56 { width: 56px; } .w67 { width: 67px; } .w83 { width: 83px; } .w84 { width: 84px; }
.h20 { height: 20px; } .h21 { height: 21px; } .h23 { height: 23px; } .h25 { height: 25px; } .h35 { height: 35px; } .h80 { height: 80px; }
.v { display: block; width: 12px; margin: auto; line-height: 12px; white-space: normal; word-break: break-all; }

.ctx { position: absolute; z-index: 10; left: 628px; top: 347px; width: 149px; padding: 2px 1px 0; border: 1px solid #8a867a; background: linear-gradient(90deg, #fbfaf5 0, #e9e6d7 25px, #fcfcf9 25px); box-shadow: 3px 3px 3px rgba(0,0,0,.35); }
.ctx button { position: relative; width: 100%; height: 22px; padding-left: 30px; }
.ctx .i { position: absolute; left: 3px; top: 2px; }
.ctx .on { background: #b4cbee; border: 1px solid #316ac5; padding-left: 29px; }
.ctx .on .i { left: 2px; top: 1px; }
.ctx hr { height: 1px; margin: 0 0 2px 30px; border: 0; background: #c0beb2; }
.guide { position: absolute; z-index: 11; inset: 0; width: 100%; height: 100%; pointer-events: none; }
```
